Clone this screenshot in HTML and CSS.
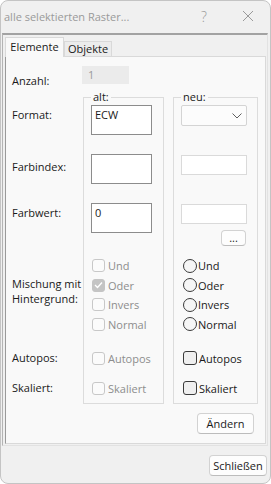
FILE: index.html
```html
<!DOCTYPE html>
<html lang="de">

<head>
    <meta charset="UTF-8">
    <meta name="viewport" content="width=device-width, initial-scale=1.0">
    <title>alle selektierten Raster...</title>
    <link rel="stylesheet" href="styles.css">
</head>

<body>
    <div class="window">
        <div class="titlebar">
            <span class="title">alle selektierten Raster...</span>
            <span class="caption-btn help">?</span>
            <span class="caption-btn close">
                <svg width="12" height="12" viewBox="0 0 12 12">
                    <path d="M1 1 L11 11 M11 1 L1 11" stroke="#9a9a9a" stroke-width="1" fill="none" />
                </svg>
            </span>
        </div>

        <div class="frame">
            <div class="tabs">
                <div class="tab active">Elemente</div>
                <div class="tab">Objekte</div>
            </div>

            <div class="panel">
                <div class="form">
                    <div class="label r-count lbl-count">Anzahl:</div>
                    <div class="count-field r-count">1</div>

                    <fieldset class="group c-alt"><legend>alt:</legend></fieldset>
                    <fieldset class="group c-neu"><legend>neu:</legend></fieldset>

                    <!-- Format -->
                    <div class="label r-format lbl-format">Format:</div>
                    <div class="textbox big c-alt r-format">ECW</div>
                    <div class="combo c-neu r-format">
                        <svg width="10" height="6" viewBox="0 0 10 6">
                            <path d="M0.5 0.5 L5 5 L9.5 0.5" stroke="#606060" stroke-width="1" fill="none" />
                        </svg>
                    </div>

                    <!-- Farbindex -->
                    <div class="label r-index lbl-index">Farbindex:</div>
                    <div class="textbox big c-alt r-index"></div>
                    <div class="textbox small c-neu r-index idx-neu"></div>

                    <!-- Farbwert -->
                    <div class="label r-value lbl-value">Farbwert:</div>
                    <div class="textbox big c-alt r-value">0</div>
                    <div class="textbox small c-neu r-value"></div>
                    <div class="c-neu r-more more-wrap"><button class="btn more">...</button></div>

                    <!-- Mischung -->
                    <div class="label r-mix lbl-mix">Mischung mit<br>Hintergrund:</div>
                    <div class="options c-alt r-mix">
                        <label class="opt disabled"><span class="check"></span>Und</label>
                        <label class="opt disabled"><span class="check checked">
                                <svg width="9" height="8" viewBox="0 0 9 8">
                                    <path d="M1 4 L3.5 6.5 L8 1.5" stroke="#fff" stroke-width="1.3" fill="none" />
                                </svg>
                            </span>Oder</label>
                        <label class="opt disabled"><span class="check"></span>Invers</label>
                        <label class="opt disabled"><span class="check"></span>Normal</label>
                    </div>
                    <div class="options c-neu r-mix">
                        <label class="opt"><span class="radio"></span>Und</label>
                        <label class="opt"><span class="radio"></span>Oder</label>
                        <label class="opt"><span class="radio"></span>Invers</label>
                        <label class="opt"><span class="radio"></span>Normal</label>
                    </div>

                    <!-- Autopos -->
                    <div class="label r-auto">Autopos:</div>
                    <label class="opt disabled single c-alt r-auto"><span class="check"></span>Autopos</label>
                    <label class="opt single c-neu r-auto"><span class="check active"></span>Autopos</label>

                    <!-- Skaliert -->
                    <div class="label r-scale">Skaliert:</div>
                    <label class="opt disabled single c-alt r-scale"><span class="check"></span>Skaliert</label>
                    <label class="opt single c-neu r-scale"><span class="check active"></span>Skaliert</label>
                </div>

                <div class="actions">
                    <button class="btn change">Ändern</button>
                </div>
            </div>
        </div>

        <div class="footer">
            <button class="btn close-btn">Schließen</button>
        </div>
    </div>
</body>

</html>
```

FILE: styles.css
```css
body {
    margin: 0;
    background-color: #ffffff;
    font-family: 'Open Sans', 'Noto Sans', sans-serif;
    font-size: 11px;
    color: #1a1a1a;
}

.window {
    width: 271px;
    height: 484px;
    box-sizing: border-box;
    border: 1px solid #c4c4c4;
    border-radius: 8px;
    background-color: #f0f0f0;
    overflow: hidden;
    display: flex;
    flex-direction: column;
}

.titlebar {
    height: 32px;
    display: flex;
    align-items: center;
    padding-left: 3px;
    padding-bottom: 2px;
    box-sizing: border-box;
}

.title {
    flex: 1;
    color: #9a9a9a;
    font-size: 11px;
}

.caption-btn {
    color: #9a9a9a;
    display: flex;
    justify-content: center;
}

.help {
    width: 14px;
    margin-right: 31px;
    font-size: 14px;
    font-weight: 300;
}

.close {
    width: 12px;
    margin-right: 16px;
}

.frame {
    height: 413px;
    box-sizing: border-box;
    margin: 0 2px 0 1px;
    border-top: 2px solid #a2a2a2;
    border-left: 1px solid #b4b4b4;
    border-right: 1px solid #e2e2e2;
    border-bottom: 1px solid #e2e2e2;
    padding: 2px 1px 1px 2px;
}

.tabs {
    display: flex;
    align-items: flex-end;
    height: 19px;
}

.tab {
    box-sizing: border-box;
    border: 1px solid #d9d9d9;
    border-bottom: 0;
    background-color: #ececec;
    height: 15px;
    line-height: 13px;
    width: 48px;
    text-align: center;
    white-space: nowrap;
}

.tab.active {
    width: 59px;
    line-height: 17px;
    background-color: #f9f9f9;
    position: relative;
    margin-bottom: -1px;
    height: 20px;
    z-index: 1;
}

.panel {
    box-sizing: border-box;
    height: 388px;
    border: 1px solid #d9d9d9;
    border-left-color: #9a9a9a;
    background-color: #f9f9f9;
    padding: 9px 11px 9px 6px;
}

.form {
    display: grid;
    grid-template-columns: 71px 81px 9px 85px;
    grid-template-rows: 18px 21px 30px 19px 30px 19px 30px 23px 78px 14px 20px 10px 20px 6px;
}

.label {
    grid-column: 1;
    line-height: 16px;
    white-space: nowrap;
}

.c-alt {
    grid-column: 2;
}

.c-neu {
    grid-column: 4;
}

.r-count {
    grid-row: 1;
}

.r-format {
    grid-row: 3;
}

.r-index {
    grid-row: 5;
}

.r-value {
    grid-row: 7;
}

.r-more {
    grid-row: 8;
}

.r-mix {
    grid-row: 9;
}

.r-auto {
    grid-row: 11;
}

.r-scale {
    grid-row: 13;
}

.lbl-count {
    margin-top: 7px;
}

.lbl-format {
    margin-top: 2px;
}

.lbl-index {
    margin-top: 5px;
}

.lbl-value {
    margin-top: 2px;
}

.lbl-mix {
    margin-top: 20px;
    line-height: 15px;
}

.r-auto.label,
.r-scale.label {
    align-self: center;
}

.count-field {
    grid-column: 2;
    margin-left: -1px;
    width: 47px;
    background-color: #ebebeb;
    color: #9a9a9a;
    line-height: 18px;
    padding-left: 6px;
    box-sizing: border-box;
}

.group {
    grid-row: 2 / 15;
    margin: 6px 0 0 0;
    padding: 0;
    min-width: 0;
    border: 1px solid #dcdcdc;
}

.group legend {
    margin-left: 7px;
    padding: 0 2px;
    line-height: 14px;
    color: #1a1a1a;
}

.textbox {
    box-sizing: border-box;
    background-color: #ffffff;
    margin-left: 8px;
    padding: 1px 3px;
    line-height: 16px;
}

.textbox.big {
    width: 61px;
    height: 30px;
    border: 1px solid #8c8c8c;
}

.textbox.small {
    width: 66px;
    height: 20px;
    border: 1px solid #dadada;
    margin-top: 1px;
}

.idx-neu {
    margin-top: 3px;
}

.combo {
    box-sizing: border-box;
    margin-left: 8px;
    width: 66px;
    height: 21px;
    border: 1px solid #d4d4d4;
    border-radius: 2px;
    background-color: #fcfcfc;
    display: flex;
    align-items: center;
    justify-content: flex-end;
    padding-right: 4px;
}

.more-wrap {
    display: flex;
    justify-content: flex-end;
    margin-top: -3px;
    padding-right: 12px;
}

.btn {
    box-sizing: border-box;
    font-family: inherit;
    font-size: 11px;
    color: #1a1a1a;
    background-color: #fdfdfd;
    border: 1px solid #d2d2d2;
    border-bottom-color: #bcbcbc;
    border-radius: 4px;
    padding: 0;
    height: 21px;
}

.btn.more {
    width: 25px;
    height: 16px;
    line-height: 10px;
}

.options {
    display: flex;
    flex-direction: column;
}

.opt {
    display: flex;
    align-items: center;
    height: 19.5px;
    color: #1a1a1a;
    white-space: nowrap;
}

.opt.disabled {
    color: #8d8d8d;
}

.opt.single {
    align-self: center;
    height: 20px;
}

.options.c-alt .opt,
.opt.single.c-alt {
    margin-left: 9px;
}

.options.c-neu .opt,
.opt.single.c-neu {
    margin-left: 10px;
}

.check {
    box-sizing: border-box;
    width: 13px;
    height: 13px;
    border: 1px solid #c8c8c8;
    border-radius: 3px;
    background-color: #fbfbfb;
    margin-right: 3px;
    display: flex;
    align-items: center;
    justify-content: center;
}

.check.checked {
    background-color: #c4c4c4;
    border-color: #c4c4c4;
}

.check.active {
    width: 14px;
    height: 14px;
    border-color: #3a3a3a;
    background-color: #efefef;
    margin-right: 2px;
}

.radio {
    box-sizing: border-box;
    width: 14px;
    height: 14px;
    border: 1px solid #3a3a3a;
    border-radius: 50%;
    background-color: #f6f6f6;
    margin-right: 1px;
}

.actions {
    display: flex;
    justify-content: flex-end;
    margin-top: 9px;
}

.btn.change {
    width: 57px;
}

.footer {
    display: flex;
    justify-content: flex-end;
    padding: 9px 3px 0 0;
}

.btn.close-btn {
    width: 58px;
}
```
